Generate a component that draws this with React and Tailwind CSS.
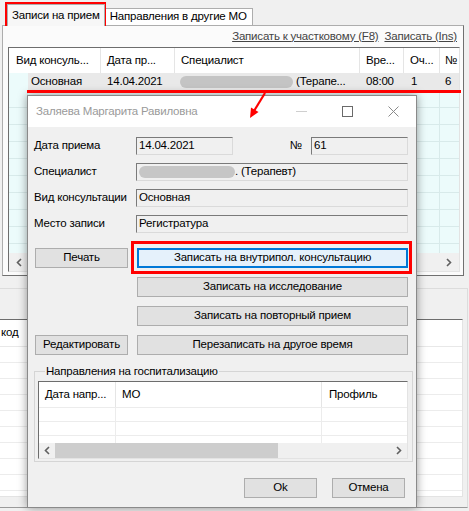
import React from "react";

const FONT = "font-['Liberation_Sans',Arial,sans-serif] tracking-[-0.2px]";
const TS = "text-[11.5px]";

function Chevron({ dir = "left" }) {
  return (
    <svg width="6" height="9" viewBox="0 0 6 9" className="block">
      {dir === "left" ? (
        <path d="M5 1 L1.5 4.5 L5 8" fill="none" stroke="#606060" strokeWidth="1.6" />
      ) : (
        <path d="M1 1 L4.5 4.5 L1 8" fill="none" stroke="#606060" strokeWidth="1.6" />
      )}
    </svg>
  );
}

function Btn({ children, className = "" }) {
  return (
    <div
      className={`flex items-center justify-center h-[20px] bg-[#e1e1e1] border border-[#adadad] text-black whitespace-nowrap ${className}`}
    >
      {children}
    </div>
  );
}

function Field({ children, className = "" }) {
  return (
    <div
      className={`h-[18px] flex items-center pl-[2px] bg-[#f0f0f0] border border-t-[#7a7a7a] border-l-[#7a7a7a] border-r-[#dadada] border-b-[#dadada] whitespace-nowrap overflow-hidden ${className}`}
    >
      {children}
    </div>
  );
}

const BG_COLS = "grid grid-cols-[19px_73px_74px_185px_44px_36px_21px]";

function BackgroundWindow() {
  const emptyRows = Array.from({ length: 10 });
  const lowerRows = Array.from({ length: 10 });
  return (
    <div className="flex flex-col">
      {/* tabs */}
      <div className="flex items-end h-[25px] pl-[7px] pt-[3px]">
        <div className="relative z-10 h-[22px] -mb-px px-[4px] flex items-center bg-[#f7f7f7] border border-b-0 border-[#adadad]">
          Записи на прием
        </div>
        <div className="h-[18px] -mb-px px-[5px] flex items-center bg-white border border-l-0 border-[#adadad]">
          Направления в другие МО
        </div>
      </div>

      {/* tab panel */}
      <div className="ml-[2px] w-[462px] h-[251px] flex flex-col bg-[#fbfbfb] border border-[#adadad] border-r-[#707070] border-b-[#707070]">
        <div className="h-[21px] flex items-center justify-end gap-[6px] pr-[6px] text-[#444]">
          <span className="underline">Записать к участковому (F8)</span>
          <span className="underline">Записать (Ins)</span>
        </div>
        <div className="ml-[5px] w-[452px] h-[225px] flex flex-col overflow-hidden bg-[#ecfbfb] border border-l-[#6d6d6d] border-t-[#6d6d6d] border-r-[#e3e3e3] border-b-[#e3e3e3]">
          <div className={`${BG_COLS} h-[25px] shrink-0 bg-white`}>
            <div className="col-span-2 flex items-center pl-[7px] border-r border-[#e5e5e5]">Вид консуль...</div>
            <div className="flex items-center pl-[6px] border-r border-[#e5e5e5]">Дата пр...</div>
            <div className="flex items-center pl-[6px] border-r border-[#e5e5e5]">Специалист</div>
            <div className="flex items-center pl-[6px] border-r border-[#e5e5e5]">Вре...</div>
            <div className="flex items-center pl-[6px] border-r border-[#e5e5e5]">Оч...</div>
            <div className="flex items-center pl-[5px] overflow-hidden">№</div>
          </div>
          <div className={`${BG_COLS} h-[18px] shrink-0`}>
            <div className="bg-[#ecfbfb]" />
            <div className="flex items-center pl-[3px] bg-[#e9e9e9]">Основная</div>
            <div className="flex items-center pl-[6px] bg-[#e9e9e9]">14.04.2021</div>
            <div className="flex items-center pl-[5px] bg-[#e9e9e9] whitespace-nowrap overflow-hidden">
              <span className="inline-block w-[113px] h-[12px] rounded-full bg-[#c4c4c4] mr-[3px] shrink-0" />
              (Терапе...
            </div>
            <div className="flex items-center pl-[6px] bg-[#e9e9e9]">08:00</div>
            <div className="flex items-center pl-[7px] bg-[#e9e9e9]">1</div>
            <div className="flex items-center pl-[5px] bg-[#e9e9e9] overflow-hidden">6</div>
          </div>
          <div className="flex-1 overflow-hidden">
            {emptyRows.map((_, i) => (
              <div key={i} className={`${BG_COLS} h-[17px]`}>
                {[0, 1, 2, 3, 4, 5, 6].map((c) => (
                  <div key={c} className={`border-b border-[#d8eaea] ${c === 0 || c === 5 ? "border-r" : ""}`} />
                ))}
              </div>
            ))}
          </div>
          <div className="h-[18px] shrink-0 flex items-center justify-between px-[7px] bg-[#f0f0f0]">
            <Chevron dir="left" />
            <Chevron dir="right" />
          </div>
        </div>
      </div>

      {/* lower section */}
      <div className="mt-[12px] -ml-px w-[469px] h-[220px] border border-[#dcdcdc] border-b-[#9a9a9a]">
        <div className="mt-[30px] w-[463px] h-[178px] flex flex-col overflow-hidden bg-white border-t border-t-[#6d6d6d] border-r border-r-[#e3e3e3] border-b border-b-[#e3e3e3]">
          <div className="h-[27px] shrink-0 flex items-center pl-[1px] border-b border-[#e8e8e8]">код</div>
          {lowerRows.map((_, i) => (
            <div key={i} className="h-[16px] shrink-0 border-b border-[#ececec]" />
          ))}
        </div>
      </div>
    </div>
  );
}

function Dialog() {
  return (
    <div className="absolute left-[27px] top-[95px] w-[390px] h-[413px] flex flex-col bg-[#f0f0f0] border border-[#8a8a8a] shadow-[0_0_9px_rgba(0,0,0,0.4)] text-black">
      {/* title bar */}
      <div className="h-[31px] shrink-0 flex items-center bg-white">
        <div className="pl-[8px] flex-1 text-[#9a9a9a]">Заляева Маргарита Равиловна</div>
        <div className="flex items-center h-full">
          <div className="w-[46px] h-full flex items-center justify-center">
            <div className="w-[11px] h-px bg-[#cfcfcf]" />
          </div>
          <div className="w-[46px] h-full flex items-center justify-center">
            <div className="w-[11px] h-[11px] border border-[#6a6a6a]" />
          </div>
          <div className="w-[46px] h-full flex items-center justify-center">
            <svg width="11" height="11" viewBox="0 0 11 11">
              <path d="M0.5 0.5 L10.5 10.5 M10.5 0.5 L0.5 10.5" stroke="#8a8a8a" strokeWidth="1" />
            </svg>
          </div>
        </div>
      </div>

      {/* body */}
      <div className="flex flex-col pl-[6px] pr-[8px] pt-[10px]">
        <div className="flex flex-col gap-[8px]">
          <div className="flex items-center">
            <div className="w-[102px]">Дата приема</div>
            <Field className="w-[97px]">14.04.2021</Field>
            <div className="flex-1 text-right pr-[9px]">№</div>
            <Field className="w-[97px]">61</Field>
          </div>
          <div className="flex items-center">
            <div className="w-[102px]">Специалист</div>
            <Field className="flex-1">
              <span className="inline-block w-[96px] h-[12px] rounded-full bg-[#c6c6c6] shrink-0" />
              . (Терапевт)
            </Field>
          </div>
          <div className="flex items-center">
            <div className="w-[102px]">Вид консультации</div>
            <Field className="flex-1">Основная</Field>
          </div>
          <div className="flex items-center">
            <div className="w-[102px]">Место записи</div>
            <Field className="flex-1">Регистратура</Field>
          </div>
        </div>

        <div className="mt-[15px] flex flex-col gap-[9px] pl-[1px]">
          <div className="flex gap-[9px]">
            <Btn className="w-[93px]">Печать</Btn>
            <div className="w-[271px] h-[20px] flex items-center justify-center bg-[#e5f1fb] border-2 border-[#0078d7] whitespace-nowrap">
              Записать на внутрипол. консультацию
            </div>
          </div>
          <div className="flex gap-[9px]">
            <div className="w-[93px]" />
            <Btn className="w-[271px]">Записать на исследование</Btn>
          </div>
          <div className="flex gap-[9px]">
            <div className="w-[93px]" />
            <Btn className="w-[271px]">Записать на повторный прием</Btn>
          </div>
          <div className="flex gap-[9px]">
            <Btn className="w-[93px]">Редактировать</Btn>
            <Btn className="w-[271px]">Перезаписать на другое время</Btn>
          </div>
        </div>

        <fieldset className="mt-[9px] ml-[0px] w-[379px] border border-[#d5d5d5] px-[3px] pb-[2px]">
          <legend className="ml-[7px] px-[1px] leading-[14px]">Направления на госпитализацию</legend>
          <div className="mt-[3px] w-[370px] h-[78px] flex flex-col overflow-hidden bg-white border border-l-[#6d6d6d] border-t-[#6d6d6d] border-r-[#e3e3e3] border-b-[#e3e3e3]">
            <div className="grid grid-cols-[77px_206px_86px] h-[25px] shrink-0">
              <div className="flex items-center pl-[6px] border-r border-[#e5e5e5]">Дата напр...</div>
              <div className="flex items-center pl-[6px] border-r border-[#e5e5e5]">МО</div>
              <div className="flex items-center pl-[7px]">Профиль</div>
            </div>
            {[14, 14, 8].map((h, i) => (
              <div key={i} className="grid grid-cols-[77px_206px_86px] shrink-0 border-t border-[#ececec]" style={{ height: h }}>
                <div className="border-r border-[#ececec]" />
                <div className="border-r border-[#ececec]" />
                <div />
              </div>
            ))}
            <div className="h-[15px] shrink-0 flex items-center bg-[#f0f0f0]">
              <div className="w-[16px] flex items-center justify-center">
                <Chevron dir="left" />
              </div>
              <div className="w-[223px] h-full bg-[#cdcdcd]" />
              <div className="flex-1" />
              <div className="w-[16px] flex items-center justify-center">
                <Chevron dir="right" />
              </div>
            </div>
          </div>
        </fieldset>

        <div className="mt-[16px] flex justify-end gap-[15px] pr-[3px]">
          <Btn className="w-[73px]">Ok</Btn>
          <Btn className="w-[73px]">Отмена</Btn>
        </div>
      </div>
    </div>
  );
}

function Annotations() {
  return (
    <>
      <div className="absolute left-[5px] top-[2px] w-[101px] h-[24px] border-[3px] border-[#ff0000] pointer-events-none" />
      <div className="absolute left-[27px] top-[90px] w-[434px] h-[3px] bg-[#ff0000] pointer-events-none" />
      <div className="absolute left-[131px] top-[241px] w-[281px] h-[33px] border-[3px] border-[#ff0000] pointer-events-none" />
      <svg className="absolute left-0 top-0 pointer-events-none" width="469" height="511" viewBox="0 0 469 511">
        <line x1="265" y1="93" x2="254" y2="111" stroke="#ff0000" strokeWidth="2.2" />
        <polygon points="250,118 258.5,112 251,107.5" fill="#ff0000" />
      </svg>
    </>
  );
}

export default function App() {
  return (
    <div className={`relative w-[469px] h-[511px] overflow-hidden bg-[#f0f0f0] text-black ${TS} ${FONT}`}>
      <BackgroundWindow />
      <Dialog />
      <Annotations />
    </div>
  );
}
